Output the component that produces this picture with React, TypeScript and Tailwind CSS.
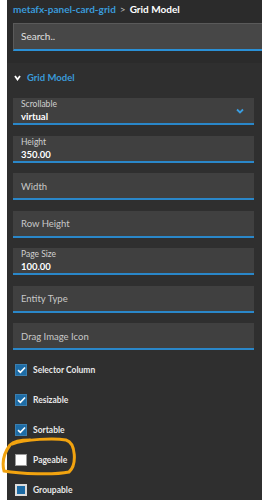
import React from 'react';

const font = { fontFamily: 'Lato, "Noto Sans", sans-serif' };

const Field = ({ label, value, select }: { label: string; value?: string; select?: boolean }) => (
  <div className="relative h-[27px] bg-[#404040] border-b-2 border-[#2a87c9] pl-[8px] flex flex-col justify-center">
    {value ? (
      <>
        <div className="text-[8.5px] leading-[12px] text-[#d0d0d0]">{label}</div>
        <div className="text-[9.5px] leading-[13px] font-bold text-white">{value}</div>
      </>
    ) : (
      <div className="text-[9.5px] leading-[14px] text-[#c8c8c8] pt-[2px]">{label}</div>
    )}
    {select && (
      <svg className="absolute right-[10px] top-[10px]" width="8" height="6" viewBox="0 0 8 6">
        <path d="M1 1.5 L4 4.5 L7 1.5" stroke="#3a9de0" strokeWidth="1.8" fill="none" />
      </svg>
    )}
  </div>
);

const Check = ({ label, state }: { label: string; state: 'on' | 'off' | 'mixed' }) => (
  <div className="flex items-center h-[20px] pl-[2px]">
    {state === 'on' && (
      <div className="w-[12px] h-[12px] bg-[#1d6ca6] border border-[#3b7fb0] flex items-center justify-center">
        <svg width="9" height="8" viewBox="0 0 9 8">
          <path d="M1 4.2 L3.4 6.4 L8 1.5" stroke="white" strokeWidth="1.6" fill="none" />
        </svg>
      </div>
    )}
    {state === 'off' && <div className="w-[12px] h-[12px] bg-white border border-[#9a9a9a]" />}
    {state === 'mixed' && (
      <div className="w-[12px] h-[12px] bg-[#dcdcdc] p-[2px]">
        <div className="w-full h-full bg-[#1d6ca6]" />
      </div>
    )}
    <span className="ml-[6px] text-[8.5px] font-bold text-[#e8e8e8]">{label}</span>
  </div>
);

export default function App() {
  return (
    <div className="relative w-[262px] h-[500px] bg-white flex overflow-hidden" style={font}>
      <div className="ml-[7px] flex-1 bg-[#2f2f2f] flex flex-col">
        <div className="bg-[#2b2b2b] pt-[1px] pb-[12px] pl-[6px]">
          <div className="flex items-center h-[16px] text-[10px] gap-[4px]">
            <span className="text-[#3a9ad9] font-bold">metafx-panel-card-grid</span>
            <span className="text-[#bbbbbb]">&gt;</span>
            <span className="text-white font-bold">Grid Model</span>
          </div>
          <div className="mt-[6px] h-[28px] bg-[#474747] border border-[#5a5a5a] border-r-0 border-b-2 border-b-[#2a90d6] pl-[7px] flex items-center">
            <span className="text-[10px] text-[#e0e0e0]">Search..</span>
          </div>
        </div>
        <div className="h-[2px] bg-[#404040]" />
        <div className="pl-[6px] pr-[8px] pt-[5px]">
          <div className="flex items-center h-[20px] pl-[1px]">
            <svg width="7" height="6" viewBox="0 0 7 6">
              <path d="M1 1 L3.5 4.5 L6 1" stroke="white" strokeWidth="1.8" fill="none" />
            </svg>
            <span className="ml-[6px] text-[9.5px] text-[#3a9ad9] font-bold">Grid Model</span>
          </div>
          <div className="mt-[10px] flex flex-col gap-[10.5px]">
            <Field label="Scrollable" value="virtual" select />
            <Field label="Height" value="350.00" />
            <Field label="Width" />
            <Field label="Row Height" />
            <Field label="Page Size" value="100.00" />
            <Field label="Entity Type" />
            <Field label="Drag Image Icon" />
          </div>
          <div className="mt-[10px] flex flex-col gap-[10px]">
            <Check label="Selector Column" state="on" />
            <Check label="Resizable" state="on" />
            <Check label="Sortable" state="on" />
            <Check label="Pageable" state="off" />
            <Check label="Groupable" state="mixed" />
          </div>
        </div>
      </div>
      {/* hand-drawn highlight around Pageable */}
      <svg className="absolute left-0 top-[435px]" width="80" height="42" viewBox="0 0 80 42">
        <path
          d="M12 9 C25 4 55 3 66 5 C76 8 77 30 69 37 C55 40 20 39 4 36 C2 28 4 18 10 10 C14 6 22 5 30 5"
          stroke="#f2a30f"
          strokeWidth="3"
          fill="none"
          strokeLinecap="round"
        />
      </svg>
    </div>
  );
}
